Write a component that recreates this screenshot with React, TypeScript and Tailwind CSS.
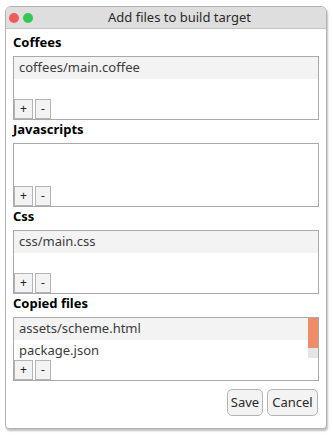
import React from 'react';

interface Section {
  label: string;
  items: string[];
  scroll?: boolean;
}

const sections: Section[] = [
  { label: 'Coffees', items: ['coffees/main.coffee'] },
  { label: 'Javascripts', items: [] },
  { label: 'Css', items: ['css/main.css'] },
  { label: 'Copied files', items: ['assets/scheme.html', 'package.json'], scroll: true },
];

const SmallButton: React.FC<{ label: string; w: string }> = ({ label, w }) => (
  <button
    className={`${w} h-[20px] flex items-center justify-center border border-[#b4b4b4] bg-[#f3f3f3] text-[12px] text-[#222] leading-none`}
  >
    {label}
  </button>
);

const FileList: React.FC<{ section: Section }> = ({ section }) => (
  <div className="h-[64px] border border-[#a9a9a9] bg-white flex flex-col">
    <div className="h-[42px] flex overflow-hidden">
      <div className="flex-1 flex flex-col">
        {section.items.map((item, i) => (
          <div
            key={item}
            className={`h-[22px] shrink-0 flex items-center pl-[5px] text-[13px] text-[#3c3c3c] ${
              i === 0 ? 'bg-[#f3f3f3]' : ''
            }`}
          >
            {item}
          </div>
        ))}
      </div>
      {section.scroll && (
        <div className="w-[10px] flex flex-col">
          <div className="h-[30px] bg-[#ee8d68]" />
          <div className="h-[10px] bg-[#e5e5e5]" />
        </div>
      )}
    </div>
    <div className="flex gap-[2px]">
      <SmallButton label="+" w="w-[19px]" />
      <SmallButton label="-" w="w-[16px]" />
    </div>
  </div>
);

export default function App() {
  return (
    <div
      className="w-[333px] h-[437px] bg-white pt-[6px] pl-[5px]"
      style={{ fontFamily: '"Noto Sans", "Open Sans", sans-serif' }}
    >
      <div className="w-[322px] h-[423px] rounded-t-[6px] rounded-b-[4px] border border-[#b3b3b3] bg-white shadow-[1px_2px_2px_rgba(0,0,0,0.25)] flex flex-col overflow-hidden">
        <div className="h-[22px] shrink-0 bg-[#dedede] border-b border-[#c4c4c4] flex items-center">
          <div className="flex gap-[4px] pl-[3px]">
            <div className="w-[10px] h-[10px] rounded-full bg-[#f05a5a]" />
            <div className="w-[10px] h-[10px] rounded-full bg-[#32c852]" />
          </div>
          <div className="flex-1 text-center text-[13px] text-[#2a2a2a]">
            Add files to build target
          </div>
        </div>
        <div className="flex-1 flex flex-col px-[7px] pt-[4px]">
          {sections.map((s) => (
            <div key={s.label} className="flex flex-col">
              <div className="h-[23px] flex items-center pb-[3px] text-[13px] font-bold text-black">
                {s.label}
              </div>
              <FileList section={s} />
            </div>
          ))}
          <div className="flex justify-end gap-[4px] mt-[8px] pr-[1px]">
            <button className="w-[36px] h-[27px] rounded-[5px] border border-[#b4b4b4] bg-[#f3f3f3] text-[13px] text-[#2a2a2a]">
              Save
            </button>
            <button className="w-[51px] h-[27px] rounded-[5px] border border-[#b4b4b4] bg-[#f3f3f3] text-[13px] text-[#2a2a2a]">
              Cancel
            </button>
          </div>
        </div>
      </div>
    </div>
  );
}
